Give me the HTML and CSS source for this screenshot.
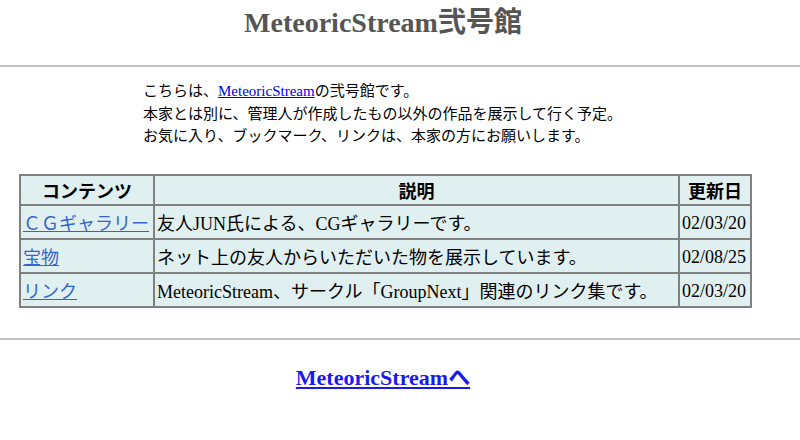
FILE: index.html
```html
<!DOCTYPE html>
<html lang="ja">
<head>
    <meta charset="UTF-8">
    <title>MeteoricStream弐号館</title>
    <link rel="stylesheet" href="styles.css">
</head>
<body>
<h1 class="title">MeteoricStream弐号館</h1>
<hr class="rule">

<div class="intro">
    こちらは、<a href="#">MeteoricStream</a>の弐号館です。<br>
    本家とは別に、管理人が作成したもの以外の作品を展示して行く予定。<br>
    お気に入り、ブックマーク、リンクは、本家の方にお願いします。
</div>

<table class="contents">
    <tr>
        <th class="col-name">コンテンツ</th>
        <th class="col-desc">説明</th>
        <th class="col-date">更新日</th>
    </tr>
    <tr>
        <td><a href="#">ＣＧギャラリー</a></td>
        <td>友人JUN氏による、CGギャラリーです。</td>
        <td class="date">02/03/20</td>
    </tr>
    <tr>
        <td><a href="#">宝物</a></td>
        <td>ネット上の友人からいただいた物を展示しています。</td>
        <td class="date">02/08/25</td>
    </tr>
    <tr>
        <td><a href="#">リンク</a></td>
        <td>MeteoricStream、サークル「GroupNext」関連のリンク集です。</td>
        <td class="date">02/03/20</td>
    </tr>
</table>

<hr class="rule rule-bottom">

<div class="back">
    <a href="#">MeteoricStreamへ</a>
</div>
</body>
</html>
```

FILE: styles.css
```css
body {
    margin: 0;
    font-family: "Liberation Serif", "Noto Sans CJK JP", serif;
    color: #000;
    background-color: #fff;
}

.title {
    margin: 0;
    padding: 7px 34px 0 0;
    height: 58px;
    text-align: center;
    font-size: 28px;
    color: #555;
    line-height: 32px;
}

.rule {
    margin: 0;
    border: none;
    border-top: 2px solid #c4c4c4;
}

.intro {
    margin: 13px 0 0 143px;
    font-size: 15px;
    line-height: 22.5px;
}

.intro a {
    color: #0000ee;
}

.contents {
    margin: 26px 0 0 19px;
    border-collapse: collapse;
    border: 2px solid #808080;
    background-color: #e0eff0;
    font-size: 18px;
}

.contents th,
.contents td {
    border: 2px solid #808080;
    padding: 0 2px;
    height: 32px;
    white-space: nowrap;
}

.contents th {
    height: 28px;
    text-align: center;
    font-weight: bold;
}

.contents td.date {
    padding-top: 4px;
    height: 28px;
}

.contents td a {
    color: #3366cc;
}

.col-name {
    width: 128px;
}

.col-desc {
    width: 519px;
}

.col-date {
    width: 66px;
}

.rule-bottom {
    margin-top: 30px;
}

.back {
    padding: 19px 34px 0 0;
    text-align: center;
    font-size: 22px;
    font-weight: bold;
}

.back a {
    color: #1a1aee;
}
```
